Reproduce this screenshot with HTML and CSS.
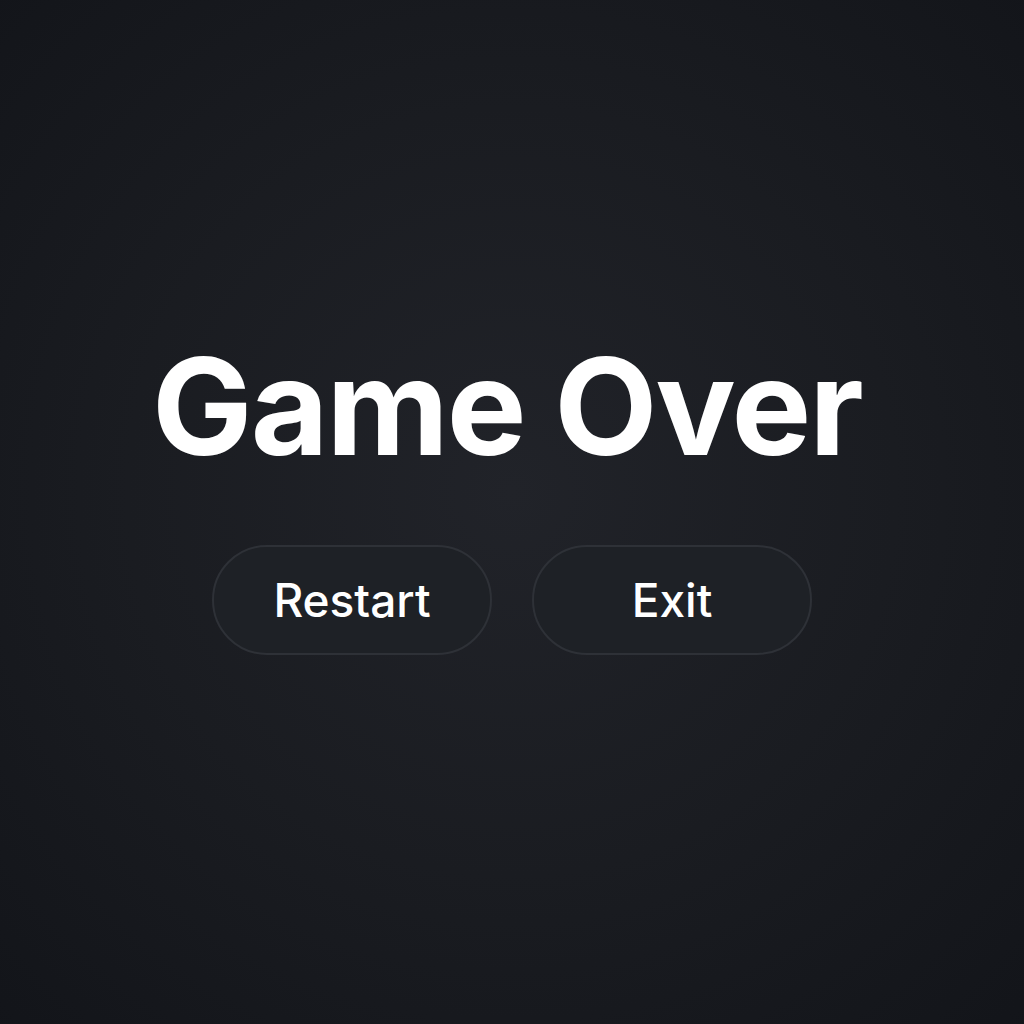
FILE: index.html
```html
<!DOCTYPE html>
<html lang="en">
<head>
<meta charset="utf-8">
<title>Game Over</title>
<link rel="stylesheet" href="styles.css">
</head>
<body>
<main class="screen">
  <h1 class="title">Game Over</h1>
  <div class="actions">
    <button class="btn">Restart</button>
    <button class="btn">Exit</button>
  </div>
</main>
</body>
</html>
```
FILE: styles.css
```css
html, body {
  margin: 0;
  padding: 0;
  height: 100%;
}
body {
  background: radial-gradient(ellipse 75% 75% at 50% 48%, #212329 0%, #1a1c21 50%, #121419 100%);
  font-family: Inter, "Open Sans", "Liberation Sans", sans-serif;
  color: #ffffff;
}
.screen {
  min-height: 100vh;
  display: flex;
  flex-direction: column;
  align-items: center;
  justify-content: center;
  box-sizing: border-box;
  padding-bottom: 31px;
}
.title {
  margin: 0 10px 0 0;
  font-size: 134px;
  font-weight: 700;
  line-height: 1;
  letter-spacing: -2px;
}
.actions {
  display: flex;
  gap: 40px;
  margin-top: 72px;
}
.btn {
  width: 280px;
  height: 110px;
  border-radius: 55px;
  border: 2px solid #2e3137;
  background: #1e2126;
  color: #ffffff;
  font-family: inherit;
  font-size: 46px;
  font-weight: 500;
  padding: 0;
  box-sizing: border-box;
}
```
